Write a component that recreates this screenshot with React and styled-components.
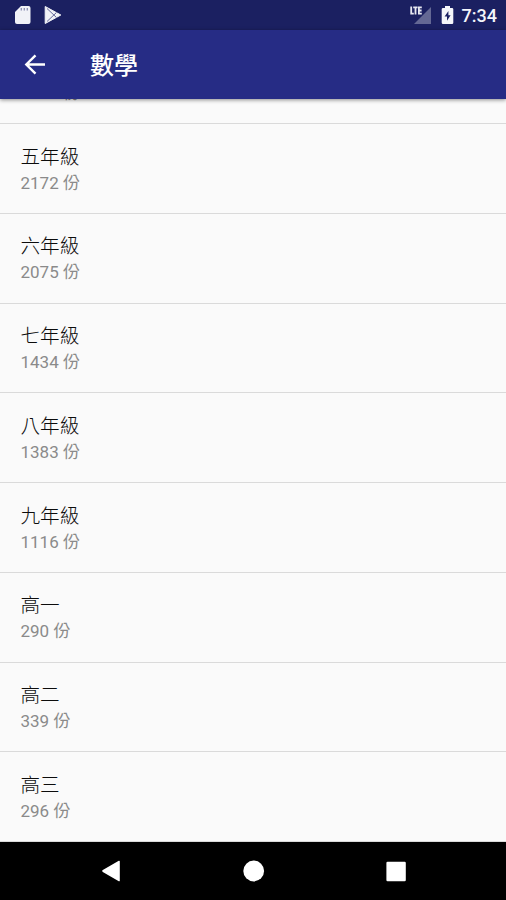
import React from 'react';
import styled, { createGlobalStyle } from 'styled-components';

const GlobalStyle = createGlobalStyle`
  * {
    box-sizing: border-box;
  }
  body {
    margin: 0;
    background: #000;
    font-family: Roboto, "Noto Sans CJK TC", sans-serif;
  }
`;

// Full phone screen
const Screen = styled.div`
  display: flex;
  flex-direction: column;
  width: 506px;
  height: 900px;
  overflow: hidden;
`;

// Android status bar
const StatusBar = styled.div`
  display: flex;
  flex: none;
  align-items: center;
  justify-content: space-between;
  height: 30px;
  padding: 0 9px 0 14px;
  background: #1b2061;
`;

const StatusGroup = styled.div`
  display: flex;
  align-items: center;
  height: 30px;
`;

const StatusIcon = styled.svg`
  display: block;
  margin-right: ${(props) => props.$gap}px;
`;

const Clock = styled.span`
  color: #f4f5fa;
  font-size: 18px;
  font-weight: 500;
  line-height: 30px;
  padding-top: 2px;
`;

// Title bar with the back button
const AppBar = styled.header`
  display: flex;
  flex: none;
  align-items: center;
  height: 69px;
  padding-left: 21px;
  background: #262c85;
  box-shadow: 0 1px 4px rgba(0, 0, 0, 0.45);
  z-index: 1;
`;

const BackButton = styled.button`
  display: flex;
  width: 28px;
  margin-right: 41px;
  padding: 0;
  border: 0;
  background: none;
`;

const Title = styled.h1`
  margin: 0;
  padding-top: 3px;
  color: #fff;
  font-size: 24px;
  font-weight: 500;
  line-height: 36px;
`;

// Scrolled to the end, so the first row is cut off by the app bar
const List = styled.ul`
  display: flex;
  flex: 1;
  flex-direction: column;
  justify-content: flex-end;
  min-height: 0;
  margin: 0;
  padding: 0;
  overflow: hidden;
  list-style: none;
  background: #fafafa;
`;

const Row = styled.li`
  flex: none;
  height: 89.75px;
  padding: 18.6px 20.5px 0;
  border-bottom: 1.5px solid #dadada;
`;

const Grade = styled.div`
  color: #0c0c0c;
  font-size: 19.6px;
  font-weight: 300;
  line-height: 29px;
`;

const Count = styled.div`
  color: #8a8a8a;
  font-size: 17px;
  line-height: 23px;
`;

// Android navigation buttons
const NavBar = styled.nav`
  display: flex;
  flex: none;
  align-items: center;
  justify-content: space-between;
  height: 58px;
  padding: 0 99px 0 101px;
  background: #000;
`;

const NavIcon = styled.svg`
  display: block;
  fill: #fff;
`;

const grades = [
  { name: '四年級', count: 2214 },
  { name: '五年級', count: 2172 },
  { name: '六年級', count: 2075 },
  { name: '七年級', count: 1434 },
  { name: '八年級', count: 1383 },
  { name: '九年級', count: 1116 },
  { name: '高一', count: 290 },
  { name: '高二', count: 339 },
  { name: '高三', count: 296 },
];

const App = () => {
  return (
    <Screen>
      <GlobalStyle />
      <StatusBar>
        <StatusGroup>
          {/* SD card */}
          <StatusIcon $gap={13} width="17" height="20" viewBox="0 0 17 20">
            <path
              d="M7 1h7.5a2 2 0 0 1 2 2v14a2 2 0 0 1-2 2H3a2 2 0 0 1-2-2V7z"
              fill="#f1f2f7"
            />
            <path d="M7.3 3v2.6M10.3 3v2.6M13.3 3v2.6" stroke="#8b8eb2" strokeWidth="1.3" />
          </StatusIcon>
          {/* Play store */}
          <StatusIcon $gap={0} width="18" height="20" viewBox="0 0 18 20">
            <path d="M1.2 1.5L16.8 10 1.2 18.5z" fill="#f1f2f7" stroke="#f1f2f7" strokeLinejoin="round" />
            <path d="M3 3.5l9.5 9M3 16.5l9.5-9" stroke="#666a99" strokeWidth="1" />
          </StatusIcon>
        </StatusGroup>
        <StatusGroup>
          {/* Mobile signal */}
          <StatusIcon $gap={9} width="24" height="20" viewBox="0 0 24 20">
            <path d="M23 2v17H6z" fill="#646894" />
            <path d="M0 0h14v10.4H0z" fill="#1b2061" />
            <path
              d="M3.2 1.4v7.2h2.6M5.2 2.3h4.4M7.5 2.3v7.1M13.8 2.3h-2.9v6.3h2.9M10.9 5.5h2.7"
              fill="none"
              stroke="#e6e7f1"
              strokeWidth="1.8"
            />
          </StatusIcon>
          {/* Battery charging */}
          <StatusIcon $gap={8} width="13" height="20" viewBox="0 0 13 20">
            <path
              d="M4 1h5v2h2a1.3 1.3 0 0 1 1.3 1.3v13.4A1.3 1.3 0 0 1 11 19H2a1.3 1.3 0 0 1-1.3-1.3V4.3A1.3 1.3 0 0 1 2 3h2z"
              fill="#f5f6fa"
            />
            <path d="M7.4 6L3.6 11.5h2.4v4.2L9.6 10.2H7.4z" fill="#1b2061" />
          </StatusIcon>
          <Clock>7:34</Clock>
        </StatusGroup>
      </StatusBar>

      <AppBar>
        <BackButton aria-label="返回">
          <svg width="28" height="28" viewBox="0 0 28 28">
            <path
              d="M24 13.5H6M14.5 4.3L5.3 13.5l9.2 9.2"
              fill="none"
              stroke="#fff"
              strokeWidth="2.4"
            />
          </svg>
        </BackButton>
        <Title>數學</Title>
      </AppBar>

      <List>
        {grades.map((grade) => (
          <Row key={grade.name}>
            <Grade>{grade.name}</Grade>
            <Count>{grade.count} 份</Count>
          </Row>
        ))}
      </List>

      <NavBar>
        {/* Back */}
        <NavIcon width="20" height="22" viewBox="0 0 20 22">
          <path d="M18.8 1.2v19.6a.7.7 0 0 1-1 .4L1.8 11.9a1 1 0 0 1 0-1.8L17.8.8a.7.7 0 0 1 1 .4z" />
        </NavIcon>
        {/* Home */}
        <NavIcon width="22" height="22" viewBox="0 0 22 22">
          <circle cx="10.7" cy="11" r="10.4" />
        </NavIcon>
        {/* Recents */}
        <NavIcon width="21" height="21" viewBox="0 0 21 21">
          <rect x="0.4" y="0.8" width="19.4" height="19.4" rx="1.2" />
        </NavIcon>
      </NavBar>
    </Screen>
  );
};

export default App;
